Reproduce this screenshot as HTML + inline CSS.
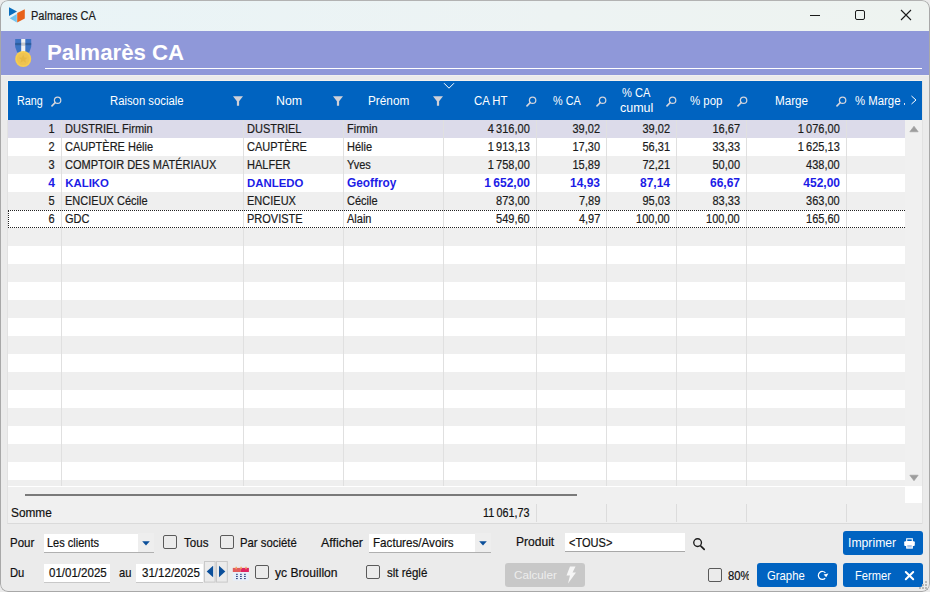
<!DOCTYPE html>
<html><head><meta charset="utf-8"><style>
html,body{margin:0;padding:0;width:930px;height:592px;overflow:hidden;background:#ebebeb;}
#win{position:absolute;left:0;top:0;width:930px;height:592px;overflow:hidden;background:#ebebeb;border-radius:8px;}
.t{position:absolute;white-space:nowrap;font-family:"Liberation Sans", sans-serif;-webkit-text-stroke:0.2px currentColor;}
#frame{position:absolute;left:0;top:0;width:930px;height:592px;box-sizing:border-box;border:1px solid #a8a8a8;border-top-color:#b2b2b2;border-radius:8px;pointer-events:none;}
</style></head><body><div id="win">
<div style="position:absolute;left:0px;top:0px;width:930px;height:31px;background:linear-gradient(90deg,#e9f4f7 0%,#edf3f3 60%,#eef3f0 100%);"></div>
<svg style="position:absolute;left:0;top:0" width="40" height="30" viewBox="0 0 40 30">
<polygon points="9,7.2 17,11.4 9,15.9" fill="#0a6ebd"/>
<polygon points="9.7,18.3 16.8,13.9 16.8,22.6" fill="#72c4ef"/>
<polygon points="17.2,12.9 24.8,9.2 24.8,18.5 17.2,22.6" fill="#e8621a"/>
</svg>
<div class="t" style="left:30.6px;top:6.00px;font-size:12.3px;line-height:20px;color:#1a1a1a;font-weight:normal;transform:scaleX(0.8952);transform-origin:0 50%;">Palmares CA</div>
<div style="position:absolute;left:810px;top:15px;width:10px;height:1px;background:#1a1a1a;"></div>
<div style="position:absolute;left:855px;top:10px;width:10px;height:10px;box-sizing:border-box;border:1px solid #1a1a1a;border-radius:2px;"></div>
<svg style="position:absolute;left:900px;top:9px" width="12" height="12" viewBox="0 0 12 12">
<path d="M1 1 L11 11 M11 1 L1 11" stroke="#1a1a1a" stroke-width="1.1" fill="none"/></svg>
<div style="position:absolute;left:1px;top:31px;width:928px;height:44px;background:#8f98d9;"></div>
<svg style="position:absolute;left:12px;top:36px" width="24" height="34" viewBox="12 36 24 34">
<path d="M15.2 39 H31.2 V47 L29.2 52.6 H17.2 L15.2 47 Z" fill="#3d74c4"/>
<rect x="21.2" y="39" width="4.1" height="14" fill="#f2f2f4"/>
<rect x="15.2" y="42.9" width="16" height="2.3" fill="#2e5e9e"/>
<rect x="21.2" y="42.9" width="4.1" height="2.3" fill="#c8c8cc"/>
<circle cx="23.2" cy="59" r="8" fill="#f7cd4f"/>
<circle cx="23.2" cy="59" r="6.3" fill="#eec351"/>
<polygon points="23.2,54.6 24.5,57.5 27.5,57.7 25.2,59.7 26,62.7 23.2,61.1 20.4,62.7 21.2,59.7 18.9,57.7 21.9,57.5" fill="#e6b944"/>
</svg>
<div class="t" style="left:46.8px;top:42.00px;font-size:22.8px;line-height:20px;color:#ffffff;font-weight:bold;-webkit-text-stroke:0;transform:scaleX(0.975);transform-origin:0 0;">Palmarès CA</div>
<div style="position:absolute;left:45px;top:68px;width:877px;height:1px;background:#ffffff;"></div>
<div style="position:absolute;left:7px;top:80px;width:916px;height:444px;box-sizing:border-box;border:1px solid #e2e2e2;border-top-color:#f5f2ee;border-bottom-color:#dadada;background:#f0f0f0;"></div>
<div style="position:absolute;left:7px;top:80px;width:1px;height:40px;background:#f5f2ee;"></div>
<div style="position:absolute;left:1px;top:75px;width:928px;height:1px;background:#f1f1ef;"></div>
<div style="position:absolute;left:8px;top:81px;width:914px;height:39px;background:#0063c0;"></div>
<div style="position:absolute;left:8px;top:120px;width:897px;height:18px;background:#dcdbea;"></div>
<div style="position:absolute;left:8px;top:138px;width:897px;height:18px;background:#ffffff;"></div>
<div style="position:absolute;left:8px;top:156px;width:897px;height:18px;background:#efefef;"></div>
<div style="position:absolute;left:8px;top:174px;width:897px;height:18px;background:#ffffff;"></div>
<div style="position:absolute;left:8px;top:192px;width:897px;height:18px;background:#efefef;"></div>
<div style="position:absolute;left:8px;top:210px;width:897px;height:18px;background:#ffffff;"></div>
<div style="position:absolute;left:8px;top:228px;width:897px;height:18px;background:#efefef;"></div>
<div style="position:absolute;left:8px;top:246px;width:897px;height:18px;background:#ffffff;"></div>
<div style="position:absolute;left:8px;top:264px;width:897px;height:18px;background:#efefef;"></div>
<div style="position:absolute;left:8px;top:282px;width:897px;height:18px;background:#ffffff;"></div>
<div style="position:absolute;left:8px;top:300px;width:897px;height:18px;background:#efefef;"></div>
<div style="position:absolute;left:8px;top:318px;width:897px;height:18px;background:#ffffff;"></div>
<div style="position:absolute;left:8px;top:336px;width:897px;height:18px;background:#efefef;"></div>
<div style="position:absolute;left:8px;top:354px;width:897px;height:18px;background:#ffffff;"></div>
<div style="position:absolute;left:8px;top:372px;width:897px;height:18px;background:#efefef;"></div>
<div style="position:absolute;left:8px;top:390px;width:897px;height:18px;background:#ffffff;"></div>
<div style="position:absolute;left:8px;top:408px;width:897px;height:18px;background:#efefef;"></div>
<div style="position:absolute;left:8px;top:426px;width:897px;height:18px;background:#ffffff;"></div>
<div style="position:absolute;left:8px;top:444px;width:897px;height:18px;background:#efefef;"></div>
<div style="position:absolute;left:8px;top:462px;width:897px;height:18px;background:#ffffff;"></div>
<div style="position:absolute;left:8px;top:480px;width:897px;height:6px;background:#efefef;"></div>
<div style="position:absolute;left:8px;top:486px;width:914px;height:1px;background:#ffffff;"></div>
<div style="position:absolute;left:61px;top:120px;width:1px;height:366px;background:#e0e0e0;"></div>
<div style="position:absolute;left:243px;top:120px;width:1px;height:366px;background:#e0e0e0;"></div>
<div style="position:absolute;left:343px;top:120px;width:1px;height:366px;background:#e0e0e0;"></div>
<div style="position:absolute;left:443px;top:120px;width:1px;height:366px;background:#e0e0e0;"></div>
<div style="position:absolute;left:536px;top:120px;width:1px;height:366px;background:#e0e0e0;"></div>
<div style="position:absolute;left:606px;top:120px;width:1px;height:366px;background:#e0e0e0;"></div>
<div style="position:absolute;left:676px;top:120px;width:1px;height:366px;background:#e0e0e0;"></div>
<div style="position:absolute;left:746px;top:120px;width:1px;height:366px;background:#e0e0e0;"></div>
<div style="position:absolute;left:846px;top:120px;width:1px;height:366px;background:#e0e0e0;"></div>
<div class="t" style="right:875px;top:119.00px;font-size:12px;line-height:20px;color:#1b1b1b;font-weight:normal;text-align:right;transform:scaleX(0.917);transform-origin:100% 50%;">1</div>
<div class="t" style="left:65.3px;top:119.00px;font-size:12px;line-height:20px;color:#1b1b1b;font-weight:normal;transform:scaleX(0.917);transform-origin:0 50%;">DUSTRIEL Firmin</div>
<div class="t" style="left:247px;top:119.00px;font-size:12px;line-height:20px;color:#1b1b1b;font-weight:normal;transform:scaleX(0.917);transform-origin:0 50%;">DUSTRIEL</div>
<div class="t" style="left:347px;top:119.00px;font-size:12px;line-height:20px;color:#1b1b1b;font-weight:normal;transform:scaleX(0.917);transform-origin:0 50%;">Firmin</div>
<div class="t" style="right:400px;top:119.00px;font-size:12px;line-height:20px;color:#1b1b1b;font-weight:normal;text-align:right;transform:scaleX(0.917);transform-origin:100% 50%;">4&#8239;316,00</div>
<div class="t" style="right:330px;top:119.00px;font-size:12px;line-height:20px;color:#1b1b1b;font-weight:normal;text-align:right;transform:scaleX(0.917);transform-origin:100% 50%;">39,02</div>
<div class="t" style="right:260px;top:119.00px;font-size:12px;line-height:20px;color:#1b1b1b;font-weight:normal;text-align:right;transform:scaleX(0.917);transform-origin:100% 50%;">39,02</div>
<div class="t" style="right:190px;top:119.00px;font-size:12px;line-height:20px;color:#1b1b1b;font-weight:normal;text-align:right;transform:scaleX(0.917);transform-origin:100% 50%;">16,67</div>
<div class="t" style="right:90px;top:119.00px;font-size:12px;line-height:20px;color:#1b1b1b;font-weight:normal;text-align:right;transform:scaleX(0.917);transform-origin:100% 50%;">1&#8239;076,00</div>
<div class="t" style="right:875px;top:137.00px;font-size:12px;line-height:20px;color:#1b1b1b;font-weight:normal;text-align:right;transform:scaleX(0.917);transform-origin:100% 50%;">2</div>
<div class="t" style="left:65.3px;top:137.00px;font-size:12px;line-height:20px;color:#1b1b1b;font-weight:normal;transform:scaleX(0.917);transform-origin:0 50%;">CAUPTÈRE Hélie</div>
<div class="t" style="left:247px;top:137.00px;font-size:12px;line-height:20px;color:#1b1b1b;font-weight:normal;transform:scaleX(0.917);transform-origin:0 50%;">CAUPTÈRE</div>
<div class="t" style="left:347px;top:137.00px;font-size:12px;line-height:20px;color:#1b1b1b;font-weight:normal;transform:scaleX(0.917);transform-origin:0 50%;">Hélie</div>
<div class="t" style="right:400px;top:137.00px;font-size:12px;line-height:20px;color:#1b1b1b;font-weight:normal;text-align:right;transform:scaleX(0.917);transform-origin:100% 50%;">1&#8239;913,13</div>
<div class="t" style="right:330px;top:137.00px;font-size:12px;line-height:20px;color:#1b1b1b;font-weight:normal;text-align:right;transform:scaleX(0.917);transform-origin:100% 50%;">17,30</div>
<div class="t" style="right:260px;top:137.00px;font-size:12px;line-height:20px;color:#1b1b1b;font-weight:normal;text-align:right;transform:scaleX(0.917);transform-origin:100% 50%;">56,31</div>
<div class="t" style="right:190px;top:137.00px;font-size:12px;line-height:20px;color:#1b1b1b;font-weight:normal;text-align:right;transform:scaleX(0.917);transform-origin:100% 50%;">33,33</div>
<div class="t" style="right:90px;top:137.00px;font-size:12px;line-height:20px;color:#1b1b1b;font-weight:normal;text-align:right;transform:scaleX(0.917);transform-origin:100% 50%;">1&#8239;625,13</div>
<div class="t" style="right:875px;top:155.00px;font-size:12px;line-height:20px;color:#1b1b1b;font-weight:normal;text-align:right;transform:scaleX(0.917);transform-origin:100% 50%;">3</div>
<div class="t" style="left:65.3px;top:155.00px;font-size:12px;line-height:20px;color:#1b1b1b;font-weight:normal;transform:scaleX(0.917);transform-origin:0 50%;">COMPTOIR DES MATÉRIAUX</div>
<div class="t" style="left:247px;top:155.00px;font-size:12px;line-height:20px;color:#1b1b1b;font-weight:normal;transform:scaleX(0.917);transform-origin:0 50%;">HALFER</div>
<div class="t" style="left:347px;top:155.00px;font-size:12px;line-height:20px;color:#1b1b1b;font-weight:normal;transform:scaleX(0.917);transform-origin:0 50%;">Yves</div>
<div class="t" style="right:400px;top:155.00px;font-size:12px;line-height:20px;color:#1b1b1b;font-weight:normal;text-align:right;transform:scaleX(0.917);transform-origin:100% 50%;">1&#8239;758,00</div>
<div class="t" style="right:330px;top:155.00px;font-size:12px;line-height:20px;color:#1b1b1b;font-weight:normal;text-align:right;transform:scaleX(0.917);transform-origin:100% 50%;">15,89</div>
<div class="t" style="right:260px;top:155.00px;font-size:12px;line-height:20px;color:#1b1b1b;font-weight:normal;text-align:right;transform:scaleX(0.917);transform-origin:100% 50%;">72,21</div>
<div class="t" style="right:190px;top:155.00px;font-size:12px;line-height:20px;color:#1b1b1b;font-weight:normal;text-align:right;transform:scaleX(0.917);transform-origin:100% 50%;">50,00</div>
<div class="t" style="right:90px;top:155.00px;font-size:12px;line-height:20px;color:#1b1b1b;font-weight:normal;text-align:right;transform:scaleX(0.917);transform-origin:100% 50%;">438,00</div>
<div class="t" style="right:875px;top:173.00px;font-size:12px;line-height:20px;color:#1c1ce6;font-weight:bold;text-align:right;-webkit-text-stroke:0;">4</div>
<div class="t" style="left:65.3px;top:173.00px;font-size:11.4px;line-height:20px;color:#1c1ce6;font-weight:bold;-webkit-text-stroke:0;">KALIKO</div>
<div class="t" style="left:247px;top:173.00px;font-size:11.4px;line-height:20px;color:#1c1ce6;font-weight:bold;-webkit-text-stroke:0;">DANLEDO</div>
<div class="t" style="left:347px;top:173.00px;font-size:11.856000000000002px;line-height:20px;color:#1c1ce6;font-weight:bold;-webkit-text-stroke:0;">Geoffroy</div>
<div class="t" style="right:400px;top:173.00px;font-size:12px;line-height:20px;color:#1c1ce6;font-weight:bold;text-align:right;-webkit-text-stroke:0;">1&#8239;652,00</div>
<div class="t" style="right:330px;top:173.00px;font-size:12px;line-height:20px;color:#1c1ce6;font-weight:bold;text-align:right;-webkit-text-stroke:0;">14,93</div>
<div class="t" style="right:260px;top:173.00px;font-size:12px;line-height:20px;color:#1c1ce6;font-weight:bold;text-align:right;-webkit-text-stroke:0;">87,14</div>
<div class="t" style="right:190px;top:173.00px;font-size:12px;line-height:20px;color:#1c1ce6;font-weight:bold;text-align:right;-webkit-text-stroke:0;">66,67</div>
<div class="t" style="right:90px;top:173.00px;font-size:12px;line-height:20px;color:#1c1ce6;font-weight:bold;text-align:right;-webkit-text-stroke:0;">452,00</div>
<div class="t" style="right:875px;top:191.00px;font-size:12px;line-height:20px;color:#1b1b1b;font-weight:normal;text-align:right;transform:scaleX(0.917);transform-origin:100% 50%;">5</div>
<div class="t" style="left:65.3px;top:191.00px;font-size:12px;line-height:20px;color:#1b1b1b;font-weight:normal;transform:scaleX(0.917);transform-origin:0 50%;">ENCIEUX Cécile</div>
<div class="t" style="left:247px;top:191.00px;font-size:12px;line-height:20px;color:#1b1b1b;font-weight:normal;transform:scaleX(0.917);transform-origin:0 50%;">ENCIEUX</div>
<div class="t" style="left:347px;top:191.00px;font-size:12px;line-height:20px;color:#1b1b1b;font-weight:normal;transform:scaleX(0.917);transform-origin:0 50%;">Cécile</div>
<div class="t" style="right:400px;top:191.00px;font-size:12px;line-height:20px;color:#1b1b1b;font-weight:normal;text-align:right;transform:scaleX(0.917);transform-origin:100% 50%;">873,00</div>
<div class="t" style="right:330px;top:191.00px;font-size:12px;line-height:20px;color:#1b1b1b;font-weight:normal;text-align:right;transform:scaleX(0.917);transform-origin:100% 50%;">7,89</div>
<div class="t" style="right:260px;top:191.00px;font-size:12px;line-height:20px;color:#1b1b1b;font-weight:normal;text-align:right;transform:scaleX(0.917);transform-origin:100% 50%;">95,03</div>
<div class="t" style="right:190px;top:191.00px;font-size:12px;line-height:20px;color:#1b1b1b;font-weight:normal;text-align:right;transform:scaleX(0.917);transform-origin:100% 50%;">83,33</div>
<div class="t" style="right:90px;top:191.00px;font-size:12px;line-height:20px;color:#1b1b1b;font-weight:normal;text-align:right;transform:scaleX(0.917);transform-origin:100% 50%;">363,00</div>
<div class="t" style="right:875px;top:209.00px;font-size:12px;line-height:20px;color:#1b1b1b;font-weight:normal;text-align:right;transform:scaleX(0.917);transform-origin:100% 50%;">6</div>
<div class="t" style="left:65.3px;top:209.00px;font-size:12px;line-height:20px;color:#1b1b1b;font-weight:normal;transform:scaleX(0.917);transform-origin:0 50%;">GDC</div>
<div class="t" style="left:247px;top:209.00px;font-size:12px;line-height:20px;color:#1b1b1b;font-weight:normal;transform:scaleX(0.917);transform-origin:0 50%;">PROVISTE</div>
<div class="t" style="left:347px;top:209.00px;font-size:12px;line-height:20px;color:#1b1b1b;font-weight:normal;transform:scaleX(0.917);transform-origin:0 50%;">Alain</div>
<div class="t" style="right:400px;top:209.00px;font-size:12px;line-height:20px;color:#1b1b1b;font-weight:normal;text-align:right;transform:scaleX(0.917);transform-origin:100% 50%;">549,60</div>
<div class="t" style="right:330px;top:209.00px;font-size:12px;line-height:20px;color:#1b1b1b;font-weight:normal;text-align:right;transform:scaleX(0.917);transform-origin:100% 50%;">4,97</div>
<div class="t" style="right:260px;top:209.00px;font-size:12px;line-height:20px;color:#1b1b1b;font-weight:normal;text-align:right;transform:scaleX(0.917);transform-origin:100% 50%;">100,00</div>
<div class="t" style="right:190px;top:209.00px;font-size:12px;line-height:20px;color:#1b1b1b;font-weight:normal;text-align:right;transform:scaleX(0.917);transform-origin:100% 50%;">100,00</div>
<div class="t" style="right:90px;top:209.00px;font-size:12px;line-height:20px;color:#1b1b1b;font-weight:normal;text-align:right;transform:scaleX(0.917);transform-origin:100% 50%;">165,60</div>
<div style="position:absolute;left:8px;top:210px;width:897px;height:18px;box-sizing:border-box;border-top:1px dotted #222;border-bottom:1px dotted #222;border-left:1px dotted #222;"></div>
<div class="t" style="left:16.7px;top:91.00px;font-size:12px;line-height:20px;color:#ffffff;font-weight:normal;transform:scaleX(0.9009);transform-origin:0 50%;-webkit-text-stroke:0;">Rang</div>
<div class="t" style="left:110.4px;top:91.00px;font-size:12px;line-height:20px;color:#ffffff;font-weight:normal;transform:scaleX(0.9423);transform-origin:0 50%;-webkit-text-stroke:0;">Raison sociale</div>
<div class="t" style="left:275.5px;top:91.00px;font-size:12px;line-height:20px;color:#ffffff;font-weight:normal;transform:scaleX(1.0325);transform-origin:0 50%;-webkit-text-stroke:0;">Nom</div>
<div class="t" style="left:367.5px;top:91.00px;font-size:12px;line-height:20px;color:#ffffff;font-weight:normal;transform:scaleX(0.9833);transform-origin:0 50%;-webkit-text-stroke:0;">Prénom</div>
<div class="t" style="left:473.7px;top:91.00px;font-size:12px;line-height:20px;color:#ffffff;font-weight:normal;transform:scaleX(0.9498);transform-origin:0 50%;-webkit-text-stroke:0;">CA HT</div>
<div class="t" style="left:553.0px;top:91.00px;font-size:12px;line-height:20px;color:#ffffff;font-weight:normal;transform:scaleX(0.9045);transform-origin:0 50%;-webkit-text-stroke:0;">% CA</div>
<div class="t" style="left:621.6px;top:83.00px;font-size:12px;line-height:20px;color:#ffffff;font-weight:normal;transform:scaleX(0.9273);transform-origin:0 50%;-webkit-text-stroke:0;">% CA</div>
<div class="t" style="left:619.7px;top:98.00px;font-size:12px;line-height:20px;color:#ffffff;font-weight:normal;transform:scaleX(1.0406);transform-origin:0 50%;-webkit-text-stroke:0;">cumul</div>
<div class="t" style="left:690.2px;top:91.00px;font-size:12px;line-height:20px;color:#ffffff;font-weight:normal;transform:scaleX(0.9529);transform-origin:0 50%;-webkit-text-stroke:0;">% pop</div>
<div class="t" style="left:774.7px;top:91.00px;font-size:12px;line-height:20px;color:#ffffff;font-weight:normal;transform:scaleX(0.9735);transform-origin:0 50%;-webkit-text-stroke:0;">Marge</div>
<div class="t" style="left:855.0px;top:91.00px;font-size:12px;line-height:20px;color:#ffffff;font-weight:normal;transform:scaleX(0.9479);transform-origin:0 50%;-webkit-text-stroke:0;">% Marge</div>
<div style="position:absolute;left:904px;top:103px;width:1.2px;height:1.5px;background:#d8dcef;"></div>
<svg style="position:absolute;left:50.5px;top:95.5px" width="11" height="11" viewBox="0 0 11 11">
<circle cx="6.6" cy="4.2" r="3.2" stroke="#d4d5dc" stroke-width="1.25" fill="none"/>
<path d="M4.3 6.5 L1 9.8" stroke="#d4d5dc" stroke-width="1.7" stroke-linecap="round"/></svg>
<svg style="position:absolute;left:526px;top:95.5px" width="11" height="11" viewBox="0 0 11 11">
<circle cx="6.6" cy="4.2" r="3.2" stroke="#d4d5dc" stroke-width="1.25" fill="none"/>
<path d="M4.3 6.5 L1 9.8" stroke="#d4d5dc" stroke-width="1.7" stroke-linecap="round"/></svg>
<svg style="position:absolute;left:596px;top:95.5px" width="11" height="11" viewBox="0 0 11 11">
<circle cx="6.6" cy="4.2" r="3.2" stroke="#d4d5dc" stroke-width="1.25" fill="none"/>
<path d="M4.3 6.5 L1 9.8" stroke="#d4d5dc" stroke-width="1.7" stroke-linecap="round"/></svg>
<svg style="position:absolute;left:666px;top:95.5px" width="11" height="11" viewBox="0 0 11 11">
<circle cx="6.6" cy="4.2" r="3.2" stroke="#d4d5dc" stroke-width="1.25" fill="none"/>
<path d="M4.3 6.5 L1 9.8" stroke="#d4d5dc" stroke-width="1.7" stroke-linecap="round"/></svg>
<svg style="position:absolute;left:736.5px;top:95.5px" width="11" height="11" viewBox="0 0 11 11">
<circle cx="6.6" cy="4.2" r="3.2" stroke="#d4d5dc" stroke-width="1.25" fill="none"/>
<path d="M4.3 6.5 L1 9.8" stroke="#d4d5dc" stroke-width="1.7" stroke-linecap="round"/></svg>
<svg style="position:absolute;left:836px;top:95.5px" width="11" height="11" viewBox="0 0 11 11">
<circle cx="6.6" cy="4.2" r="3.2" stroke="#d4d5dc" stroke-width="1.25" fill="none"/>
<path d="M4.3 6.5 L1 9.8" stroke="#d4d5dc" stroke-width="1.7" stroke-linecap="round"/></svg>
<svg style="position:absolute;left:233px;top:96px" width="10" height="10" viewBox="0 0 10 10">
<path d="M0 0.2 H10 L6.1 5.2 V9.8 H3.9 V5.2 Z" fill="#d0d1d8"/></svg>
<svg style="position:absolute;left:333px;top:96px" width="10" height="10" viewBox="0 0 10 10">
<path d="M0 0.2 H10 L6.1 5.2 V9.8 H3.9 V5.2 Z" fill="#d0d1d8"/></svg>
<svg style="position:absolute;left:433px;top:96px" width="10" height="10" viewBox="0 0 10 10">
<path d="M0 0.2 H10 L6.1 5.2 V9.8 H3.9 V5.2 Z" fill="#d0d1d8"/></svg>
<svg style="position:absolute;left:443px;top:82px" width="12" height="8" viewBox="0 0 12 8">
<path d="M1 1.2 L6 6.2 L11 1.2" stroke="#ffffff" stroke-width="1" fill="none"/></svg>
<svg style="position:absolute;left:910px;top:95px" width="8" height="10" viewBox="0 0 8 10">
<path d="M1.5 1 L6 5 L1.5 9" stroke="#ffffff" stroke-width="1" fill="none"/></svg>
<div style="position:absolute;left:905px;top:120px;width:17px;height:366px;background:#f0f0f0;"></div>
<div style="position:absolute;left:922px;top:81px;width:1px;height:443px;background:#e2e2e2;"></div>
<svg style="position:absolute;left:905px;top:120px" width="17" height="366" viewBox="0 0 17 366">
<path d="M9 6.2 L13.2 11.8 H4.8 Z" fill="#9d9d9d" stroke="#9d9d9d" stroke-width="0.6" stroke-linejoin="round"/>
<path d="M4.8 355.2 H13.2 L9 360.8 Z" fill="#9d9d9d" stroke="#9d9d9d" stroke-width="0.6" stroke-linejoin="round"/></svg>
<div style="position:absolute;left:905px;top:487px;width:17px;height:16px;background:#ffffff;"></div>
<div style="position:absolute;left:25px;top:494px;width:552px;height:2px;background:#7a7a7a;"></div>
<div class="t" style="left:11.2px;top:503.00px;font-size:12.2px;line-height:20px;color:#111111;font-weight:normal;transform:scaleX(0.9714);transform-origin:0 50%;">Somme</div>
<div class="t" style="left:483.2px;top:503.00px;font-size:12px;line-height:20px;color:#111111;font-weight:normal;transform:scaleX(0.9007);transform-origin:0 50%;">11 061,73</div>
<div style="position:absolute;left:536px;top:504px;width:1px;height:18px;background:#dcdcdc;"></div>
<div style="position:absolute;left:606px;top:504px;width:1px;height:18px;background:#dcdcdc;"></div>
<div style="position:absolute;left:676px;top:504px;width:1px;height:18px;background:#dcdcdc;"></div>
<div style="position:absolute;left:746px;top:504px;width:1px;height:18px;background:#dcdcdc;"></div>
<div style="position:absolute;left:846px;top:504px;width:1px;height:18px;background:#dcdcdc;"></div>
<div class="t" style="left:9.5px;top:533.00px;font-size:12.4px;line-height:20px;color:#111111;font-weight:normal;transform:scaleX(0.9295);transform-origin:0 50%;">Pour</div>
<div style="position:absolute;left:138.0px;top:533px;width:16px;height:19px;background:#eeeeee;"></div><div style="position:absolute;left:43.5px;top:534px;width:94.5px;height:18px;background:#ffffff;"></div><div style="position:absolute;left:43.5px;top:552px;width:110.5px;height:1px;background:#b0b0b0;"></div><svg style="position:absolute;left:142.0px;top:540.5px" width="8" height="5" viewBox="0 0 8 5"><polygon points="0.2,0.2 7.8,0.2 4,4.6" fill="#0b4f9a"/></svg><div class="t" style="left:47.3px;top:533.00px;font-size:12.4px;line-height:20px;color:#111111;font-weight:normal;transform:scaleX(0.8887);transform-origin:0 50%;">Les clients</div>
<div style="position:absolute;left:163px;top:535px;width:14px;height:14px;box-sizing:border-box;border:1px solid #5a5a5a;border-radius:2px;"></div>
<div class="t" style="left:183.5px;top:533.00px;font-size:12.4px;line-height:20px;color:#111111;font-weight:normal;transform:scaleX(0.9333);transform-origin:0 50%;">Tous</div>
<div style="position:absolute;left:220px;top:535px;width:14px;height:14px;box-sizing:border-box;border:1px solid #5a5a5a;border-radius:2px;"></div>
<div class="t" style="left:240.3px;top:533.00px;font-size:12.4px;line-height:20px;color:#111111;font-weight:normal;transform:scaleX(0.9145);transform-origin:0 50%;">Par société</div>
<div class="t" style="left:321.2px;top:533.00px;font-size:12.4px;line-height:20px;color:#111111;font-weight:normal;transform:scaleX(1.0036);transform-origin:0 50%;">Afficher</div>
<div style="position:absolute;left:474.9px;top:533px;width:16px;height:19px;background:#eeeeee;"></div><div style="position:absolute;left:369.2px;top:534px;width:105.7px;height:18px;background:#ffffff;"></div><div style="position:absolute;left:369.2px;top:552px;width:121.7px;height:1px;background:#b0b0b0;"></div><svg style="position:absolute;left:478.9px;top:540.5px" width="8" height="5" viewBox="0 0 8 5"><polygon points="0.2,0.2 7.8,0.2 4,4.6" fill="#0b4f9a"/></svg><div class="t" style="left:373.3px;top:533.00px;font-size:12.4px;line-height:20px;color:#111111;font-weight:normal;transform:scaleX(0.9397);transform-origin:0 50%;">Factures/Avoirs</div>
<div class="t" style="left:515.6px;top:532.00px;font-size:12.4px;line-height:20px;color:#111111;font-weight:normal;transform:scaleX(0.9732);transform-origin:0 50%;">Produit</div>
<div style="position:absolute;left:565px;top:533px;width:120px;height:18px;background:#ffffff;"></div>
<div style="position:absolute;left:565px;top:551px;width:120px;height:1px;background:#a8a8a8;"></div>
<div class="t" style="left:569.3px;top:533.00px;font-size:12.4px;line-height:20px;color:#111111;font-weight:normal;transform:scaleX(0.8923);transform-origin:0 50%;">&lt;TOUS&gt;</div>
<svg style="position:absolute;left:688px;top:534px" width="24" height="20" viewBox="688 534 24 20">
<circle cx="697.6" cy="542.6" r="3.85" stroke="#1b1b1b" stroke-width="1.35" fill="none"/>
<path d="M700.9 546.1 L704.2 549.3" stroke="#1b1b1b" stroke-width="1.7" stroke-linecap="round"/></svg>
<div class="t" style="left:9.5px;top:563.00px;font-size:12.4px;line-height:20px;color:#111111;font-weight:normal;transform:scaleX(0.9071);transform-origin:0 50%;">Du</div>
<div style="position:absolute;left:43.5px;top:564px;width:66.5px;height:18px;background:#ffffff;"></div>
<div style="position:absolute;left:43.5px;top:582px;width:66.5px;height:1px;background:#c8c8c8;"></div>
<div class="t" style="left:49.0px;top:563.00px;font-size:12.4px;line-height:20px;color:#111111;font-weight:normal;transform:scaleX(0.9306);transform-origin:0 50%;">01/01/2025</div>
<div class="t" style="left:119.2px;top:563.00px;font-size:12.4px;line-height:20px;color:#111111;font-weight:normal;transform:scaleX(0.9018);transform-origin:0 50%;">au</div>
<div style="position:absolute;left:136.4px;top:564px;width:67px;height:18px;background:#ffffff;"></div>
<div style="position:absolute;left:136.4px;top:582px;width:67px;height:1px;background:#c8c8c8;"></div>
<div class="t" style="left:142.1px;top:563.00px;font-size:12.4px;line-height:20px;color:#111111;font-weight:normal;transform:scaleX(0.9323);transform-origin:0 50%;">31/12/2025</div>
<svg style="position:absolute;left:200px;top:558px" width="56" height="28" viewBox="200 558 56 28"><rect x="204.5" y="561.5" width="10.6" height="20.6" fill="#ebebeb" stroke="#c9c9c9" stroke-width="1"/><rect x="216.5" y="561.5" width="10.8" height="20.6" fill="#ebebeb" stroke="#c9c9c9" stroke-width="1"/><polygon points="213.1,565.8 213.1,577.2 206.7,571.4" fill="#0b4f9a"/><polygon points="219,565.8 219,577.2 225.3,571.4" fill="#0b4f9a"/><rect x="232.8" y="570" width="16.1" height="10.6" fill="#e6eefa"/><rect x="232.8" y="567.9" width="8" height="4.1" fill="#e25c5c"/><rect x="240.8" y="567.9" width="8.1" height="4.1" fill="#dd2461"/><g fill="#f2a35a"><rect x="235.5" y="566.8" width="1.4" height="2.4"/><rect x="240.4" y="566.8" width="1.4" height="2.4"/><rect x="245.3" y="566.8" width="1.4" height="2.4"/></g><g fill="#3c4f8a"><rect x="236" y="573.8" width="1.8" height="1.1"/><rect x="240" y="573.8" width="1.8" height="1.1"/><rect x="244" y="573.8" width="1.8" height="1.1"/><rect x="236" y="575.9" width="1.8" height="1.1"/><rect x="240" y="575.9" width="1.8" height="1.1"/><rect x="244" y="575.9" width="1.8" height="1.1"/><rect x="236" y="578" width="1.8" height="1.1"/><rect x="240" y="578" width="1.8" height="1.1"/><rect x="244" y="578" width="1.8" height="1.1"/></g></svg>
<div style="position:absolute;left:255px;top:565px;width:14px;height:14px;box-sizing:border-box;border:1px solid #5a5a5a;border-radius:2px;"></div>
<div class="t" style="left:275.0px;top:563.00px;font-size:12.4px;line-height:20px;color:#111111;font-weight:normal;transform:scaleX(0.9762);transform-origin:0 50%;">yc Brouillon</div>
<div style="position:absolute;left:366px;top:565px;width:14px;height:14px;box-sizing:border-box;border:1px solid #5a5a5a;border-radius:2px;"></div>
<div class="t" style="left:386.6px;top:563.00px;font-size:12.4px;line-height:20px;color:#111111;font-weight:normal;transform:scaleX(0.9291);transform-origin:0 50%;">slt réglé</div>
<div style="position:absolute;left:505px;top:563px;width:80px;height:24px;background:#c8c8c8;border-radius:3px;"></div>
<div class="t" style="left:513.9px;top:565.00px;font-size:11.8px;line-height:20px;color:#ededed;font-weight:normal;transform:scaleX(0.9896);transform-origin:0 50%;-webkit-text-stroke:0;">Calculer</div>
<svg style="position:absolute;left:565px;top:566px" width="12" height="18" viewBox="0 0 12 18">
<polygon points="5,0.5 10.5,0.5 7.5,6.5 11,6.5 3,17.5 5,9.5 1.5,9.5" fill="#f6f6f6"/></svg>
<div style="position:absolute;left:708px;top:568px;width:14px;height:14px;box-sizing:border-box;border:1px solid #5a5a5a;border-radius:2px;"></div>
<div style="position:absolute;left:726px;top:565px;width:22.5px;height:20px;overflow:hidden"><div class="t" style="left:2.0px;top:1.00px;font-size:12.4px;line-height:20px;color:#111111;font-weight:normal;transform:scaleX(0.9045);transform-origin:0 50%;">80%</div></div>
<div style="position:absolute;left:843px;top:531px;width:80px;height:24px;background:#0063c1;border-radius:3px;"></div><div class="t" style="left:848.4px;top:533.00px;font-size:12.2px;line-height:20px;color:#ffffff;font-weight:normal;transform:scaleX(1.0016);transform-origin:0 50%;-webkit-text-stroke:0;">Imprimer</div>
<svg style="position:absolute;left:903px;top:537px" width="13" height="13" viewBox="903 537 13 13">
<rect x="906.7" y="538.8" width="5.6" height="2.8" fill="none" stroke="#ffffff" stroke-width="1.1"/>
<rect x="904.2" y="541.3" width="10.6" height="4.8" rx="1" fill="#ffffff"/>
<rect x="906.7" y="544.5" width="5.6" height="3.6" fill="#a9c6ea" stroke="#ffffff" stroke-width="1.1"/></svg>
<div style="position:absolute;left:757.4px;top:563.3px;width:79.5px;height:23.5px;background:#0063c1;border-radius:3px;"></div><div class="t" style="left:767.3px;top:566.00px;font-size:12.2px;line-height:20px;color:#ffffff;font-weight:normal;transform:scaleX(0.9276);transform-origin:0 50%;-webkit-text-stroke:0;">Graphe</div>
<svg style="position:absolute;left:812px;top:564px" width="24" height="24" viewBox="812 564 24 24">
<path d="M825.2 578.3 A4 4 0 1 1 825.4 572.9" stroke="#ffffff" stroke-width="1.25" fill="none"/>
<polygon points="823.6,574.6 828.4,573.6 826.2,577.2" fill="#ffffff"/></svg>
<div style="position:absolute;left:843px;top:563.3px;width:80px;height:23.5px;background:#0063c1;border-radius:3px;"></div><div class="t" style="left:854.6px;top:566.00px;font-size:12.2px;line-height:20px;color:#ffffff;font-weight:normal;transform:scaleX(0.9146);transform-origin:0 50%;-webkit-text-stroke:0;">Fermer</div>
<svg style="position:absolute;left:898px;top:564px" width="24" height="24" viewBox="898 564 24 24">
<path d="M905.8 572 L913.2 579.3 M913.2 572 L905.8 579.3" stroke="#ffffff" stroke-width="2" stroke-linecap="round"/></svg>
<div style="position:absolute;left:925px;top:581px;width:2px;height:2px;background:#b8b8b8;"></div>
<div style="position:absolute;left:922px;top:584px;width:2px;height:2px;background:#b8b8b8;"></div>
<div style="position:absolute;left:925px;top:584px;width:2px;height:2px;background:#b8b8b8;"></div>
<div style="position:absolute;left:919px;top:587px;width:2px;height:2px;background:#b8b8b8;"></div>
<div style="position:absolute;left:922px;top:587px;width:2px;height:2px;background:#b8b8b8;"></div>
<div style="position:absolute;left:925px;top:587px;width:2px;height:2px;background:#b8b8b8;"></div>
<div id="frame"></div>
</div></body></html>
